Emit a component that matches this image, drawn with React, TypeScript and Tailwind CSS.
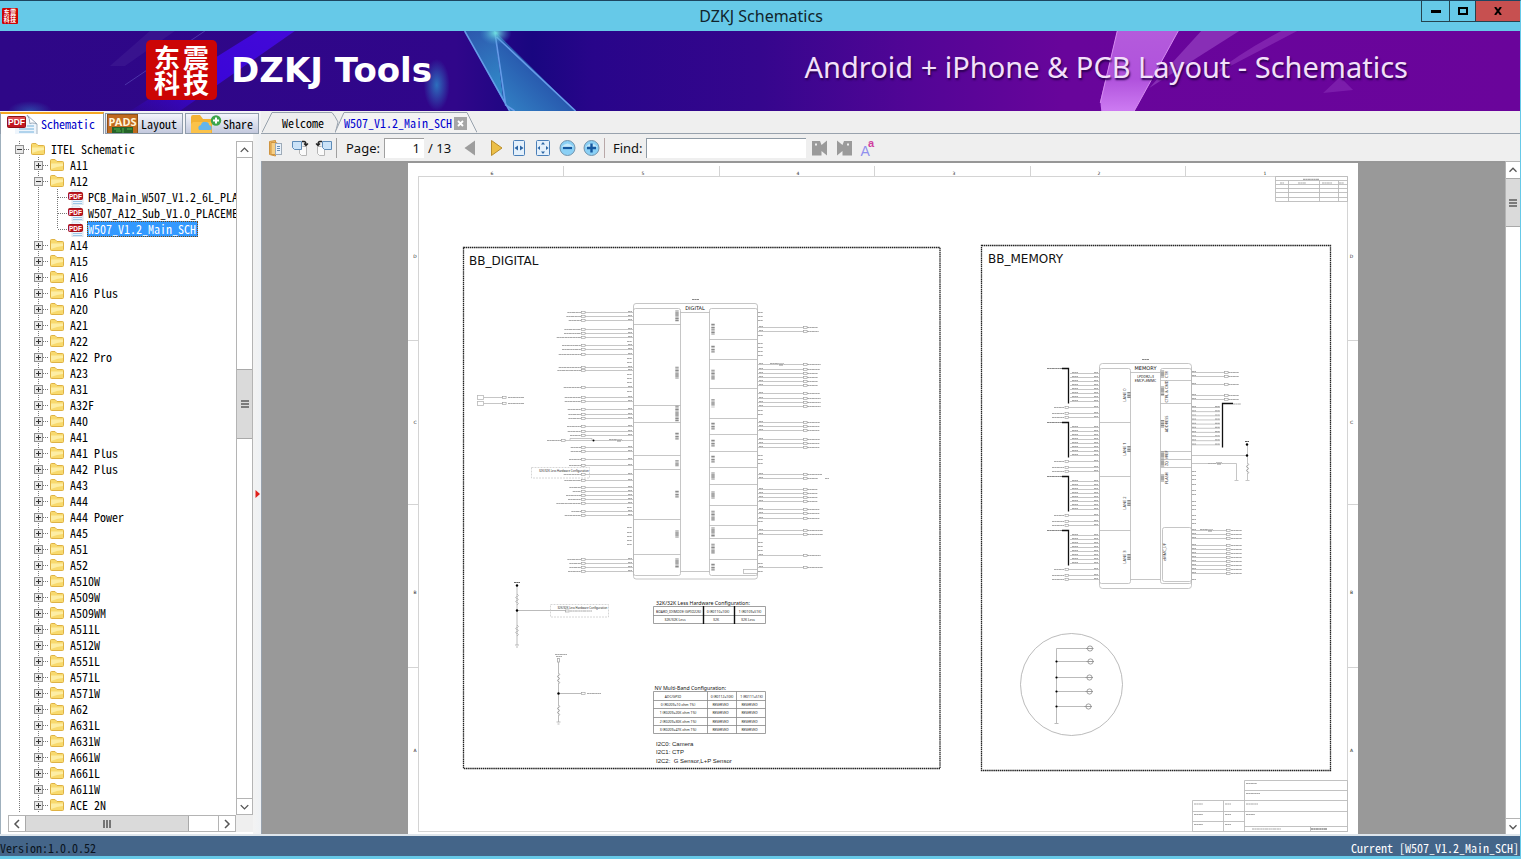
import React from "react";

const mono = "font-['Noto_Sans_Mono_CJK_SC','DejaVu_Sans_Mono',monospace]";

/* ---------- tree ---------- */

type Cell = "line" | "plus" | "minus" | "root" | "branch" | "last";
type Row = { cells: Cell[]; label: string; kind: "folder" | "pdf"; selected?: boolean };

const folder = (label: string): Row => ({ cells: ["line", "plus"], label, kind: "folder" });

const later = [
  "A14", "A15", "A16", "A16 Plus", "A20", "A21", "A22", "A22 Pro", "A23", "A31", "A32F", "A40", "A41",
  "A41 Plus", "A42 Plus", "A43", "A44", "A44 Power", "A45", "A51", "A52", "A510W", "A509W", "A509WM",
  "A511L", "A512W", "A551L", "A571L", "A571W", "A62", "A631L", "A631W", "A661W", "A661L", "A611W", "ACE 2N",
];

const rows: Row[] = [
  { cells: ["root"], label: "ITEL Schematic", kind: "folder" },
  folder("A11"),
  { cells: ["line", "minus"], label: "A12", kind: "folder" },
  { cells: ["line", "line", "branch"], label: "PCB_Main_W507_V1.2_6L_PLACEMENT", kind: "pdf" },
  { cells: ["line", "line", "branch"], label: "W507_A12_Sub_V1.0_PLACEMENT", kind: "pdf" },
  { cells: ["line", "line", "last"], label: "W507_V1.2_Main_SCH", kind: "pdf", selected: true },
  ...later.map(folder),
];

function TreeCell({ type }: { type: Cell }) {
  const box = type === "plus" || type === "minus" || type === "root";
  return (
    <svg viewBox="0 0 19 16" className="h-4 w-[19px] shrink-0" aria-hidden="true">
      <path d={type === "last" ? "M9.5 0V8" : "M9.5 0V16"} stroke="#777" strokeDasharray="1 1" />
      {type !== "line" && <path d="M10 8.5H19" stroke="#777" strokeDasharray="1 1" />}
      {box && (
        <>
          <rect x="5.5" y="4.5" width="8" height="8" fill="#e9e9e9" stroke="#919191" />
          <path d={type === "plus" ? "M7 8.5H12M9.5 6V11" : "M7 8.5H12"} stroke="#333" />
        </>
      )}
    </svg>
  );
}

function FolderIcon() {
  return (
    <svg viewBox="0 0 18 16" className="h-4 w-[18px] shrink-0" aria-hidden="true">
      <path d="M2.5 3.5Q2.5 2.5 3.5 2.5H7L9 4.5H14.5Q15.5 4.5 15.5 5.5V12.5Q15.5 13.5 14.5 13.5H3.5Q2.5 13.5 2.5 12.5Z" fill="#f8da6e" stroke="#dfb244" />
      <path d="M3 6.5H15V9Q9 9.5 3 12Z" fill="#fdeea5" />
    </svg>
  );
}

function PdfIcon({ className }: { className: string }) {
  return (
    <svg viewBox="0 0 31 24" className={className} aria-hidden="true">
      <path d="M8 4H20L30 12V24H8Z" fill="#eef5fc" />
      <path d="M20 3L30 12Q24 10 23 12Q23 6 20 3Z" fill="#fff" stroke="#98a9ba" />
      <path d="M30 12V24" stroke="#a4b4c4" />
      <path d="M20 14H27M12 17H27M12 20H27M12 23H27" stroke="#9cc7e6" strokeWidth="1.6" />
      <rect x="0.5" y="4.5" width="18" height="11" rx="1" fill="#c31721" stroke="#8f1018" />
      <path d="M1 5H18V8H1Z" fill="#dc4a50" />
      <text x="9.5" y="13.2" fontSize="8.5" fontWeight="700" fill="#fff" textAnchor="middle" fontFamily="Liberation Sans, sans-serif">PDF</text>
    </svg>
  );
}

function SmallPdfIcon() {
  return (
    <svg viewBox="0 0 18 16" className="h-4 w-[18px] shrink-0" aria-hidden="true">
      <path d="M5 1H12L16 5V16H5Z" fill="#eef5fc" stroke="#c3d0dc" strokeWidth=".6" />
      <path d="M6 12.5H15M6 14.5H15" stroke="#9cc7e6" />
      <rect x="1.5" y="3.5" width="14" height="7" rx="1" fill="#c31721" stroke="#a3141c" />
      <text x="8.5" y="9.6" fontSize="6.5" fontWeight="700" fill="#fff" textAnchor="middle" fontFamily="Liberation Sans, sans-serif">PDF</text>
    </svg>
  );
}

const rowLabel = {
  folder: "ml-1 h-4",
  pdf: "ml-[3px] h-4",
  selected: "ml-0.5 h-4 bg-[#3399ff] pl-px pr-0.5 text-white outline-1 -outline-offset-1 outline-dotted outline-[#7a4a10]",
};

function Tree() {
  return (
    <ul className={`min-w-0 flex-1 overflow-hidden pl-0.5 text-[12px] leading-4 text-black ${mono}`}>
      {rows.map((r) => (
        <li key={r.label} className="flex h-4 items-center whitespace-nowrap">
          {r.cells.map((c, i) => (
            <TreeCell key={i} type={c} />
          ))}
          {r.kind === "folder" ? <FolderIcon /> : <SmallPdfIcon />}
          <button className={r.selected ? rowLabel.selected : rowLabel[r.kind]}>{r.label}</button>
        </li>
      ))}
    </ul>
  );
}

/* ---------- scroll bars ---------- */

function Chevron({ d }: { d: string }) {
  return (
    <svg viewBox="0 0 16 16" className="size-4" aria-hidden="true">
      <path d={d} fill="none" stroke="#555" strokeWidth="1.5" />
    </svg>
  );
}
const UP = "M4 10L8 6L12 10";
const DOWN = "M4 6L8 10L12 6";
const LEFT = "M10 4L6 8L10 12";
const RIGHT = "M6 4L10 8L6 12";

function Grip({ vertical }: { vertical?: boolean }) {
  return (
    <svg viewBox="0 0 8 8" className="size-2" aria-hidden="true">
      <path d={vertical ? "M0 1H8M0 4H8M0 7H8" : "M1 0V8M4 0V8M7 0V8"} stroke="#5c5c5c" strokeWidth="1.6" />
    </svg>
  );
}

const scrollBtn = "flex shrink-0 items-center justify-center overflow-hidden border-[#b4b4b4] bg-white";

/* ---------- schematic sheet ---------- */

const dy = (v: number) => Math.round(280 + v / 3) + 0.5;
const my = (v: number) => Math.round(340 + v / 3) + 0.5;

/* label start, pin y, in drawing units */
const digitalLeft: [number, number][] = [
  [352, 97], [349, 109], [356, 121], [343, 146], [342, 159], [320, 172], [336, 196], [336, 208], [326, 221],
  [326, 260], [322, 271], [341, 320], [344, 352], [344, 364], [353, 388], [355, 401], [355, 413], [351, 439],
  [353, 452], [360, 464], [362, 502], [362, 514], [357, 538], [357, 556], [341, 583], [343, 601], [358, 620],
  [368, 632], [348, 644], [354, 657], [319, 669], [364, 693], [344, 706], [352, 837], [358, 850], [358, 862], [354, 874],
];
const digitalLeftStubs = [183, 233, 245, 283, 295, 307, 332, 681, 742, 755, 767, 780, 793];
const digitalRight: [number, number][] = [
  [1103, 140], [1106, 152], [1112, 253], [1110, 266], [1103, 278], [1103, 290], [1103, 302], [1103, 314],
  [1110, 340], [1112, 353], [1112, 365], [1112, 377], [1110, 427], [1108, 439], [1108, 451], [1110, 478],
  [1108, 490], [1108, 502], [1116, 583], [1104, 595], [1102, 626], [1102, 638], [1102, 650], [1102, 663],
  [1108, 688], [1108, 700], [1108, 713], [1118, 750], [1118, 763], [1112, 824], [1118, 862],
];
const digitalRightStubs = [97, 107, 121, 164, 188, 201, 214, 226, 389, 401, 524, 537, 550, 724, 787, 799, 811, 849, 874];

function Micro({ x1, x2, y, w = 1.2, c = "#aaa" }: { x1: number; x2: number; y: number; w?: number; c?: string }) {
  return <path d={`M${x1} ${y}H${x2}`} stroke={c} strokeWidth={w} strokeDasharray="2.4 .3 1.6 .3 3.2 .4" />;
}

function VMicro({ x, y, len }: { x: number; y: number; len: number }) {
  return (
    <path d={`M${x} ${y - len / 2}V${y + len / 2}`} stroke="#8a8a8a" strokeWidth="3.4" strokeDasharray="1.1 .5 .6 .6 1.5 .5" />
  );
}

function Port({ x, y }: { x: number; y: number }) {
  return <rect x={x - 1.5} y={y - 1} width="3.6" height="2" fill="#fff" stroke="#999" strokeWidth=".6" />;
}

function Resistor({ x, y }: { x: number; y: number }) {
  return <path d={`M${x} ${y}l1 -1.4l1 2.8l1 -2.8l1 2.8l1 -2.8l1 1.4`} fill="#fff" stroke="#888" strokeWidth=".6" />;
}

function VResistor({ x, y }: { x: number; y: number }) {
  return <path d={`M${x} ${y}l1.4 1.5l-2.8 2l2.8 2l-2.8 2l2.8 2l-1.4 1.5`} fill="#fff" stroke="#888" strokeWidth=".6" />;
}

function DigitalBlock() {
  return (
    <g fill="none" stroke="#b8b8b8" strokeWidth=".8">
      <rect x="633.5" y="303.5" width="124" height="275.5" rx="2.5" />
      <rect x="633.5" y="308.5" width="47" height="267" rx="2" />
      <rect x="709.5" y="308.5" width="48" height="267" rx="2" />
      <path d="M680.5 312.5H709.5M680.5 571.5H709.5" />
      {[133, 376, 427, 526, 568, 718, 823].map((v) => (
        <path key={v} d={`M633.5 ${dy(v)}H680.5`} />
      ))}
      {[178, 238, 325, 415, 463, 514, 562, 613, 676, 736, 775, 838].map((v) => (
        <path key={v} d={`M709.5 ${dy(v)}H757.5`} />
      ))}
      <rect x="743.5" y="569.5" width="14" height="4" />
      {[[108, 11], [278, 12], [401, 16], [469, 7], [550, 6], [643, 7], [762, 7], [849, 9]].map(([v, l]) => (
        <VMicro key={v} x={677} y={280 + v / 3} len={l} />
      ))}
      {[[148, 11], [208, 7], [284, 10], [370, 8], [439, 7], [490, 7], [538, 7], [588, 7], [645, 7], [707, 10], [756, 9], [806, 10], [862, 7]].map(([v, l]) => (
        <VMicro key={v} x={713} y={280 + v / 3} len={l} />
      ))}
      {digitalLeft.map(([s, v]) => (
        <g key={v}>
          <path d={`M585 ${dy(v)}H633`} />
          <Port x={583} y={dy(v)} />
          <Micro x1={450 + s / 3} x2={581} y={dy(v)} />
          <Micro x1={628} x2={632} y={dy(v) - 1} />
        </g>
      ))}
      {digitalLeftStubs.map((v) => (
        <Micro key={v} x1={627} x2={632} y={dy(v)} />
      ))}
      {digitalRight.map(([e, v]) => (
        <g key={v}>
          <path d={`M758 ${dy(v)}H804`} />
          <Port x={805} y={dy(v)} />
          <Micro x1={807} x2={450 + e / 3} y={dy(v)} />
          <Micro x1={759} x2={763} y={dy(v) - 1} />
        </g>
      ))}
      {digitalRightStubs.map((v) => (
        <Micro key={v} x1={758} x2={763} y={dy(v)} />
      ))}
      <path d="M565 440.5H633" />
      <Port x={563} y={440.5} />
      <Micro x1={547} x2={561} y={440.5} />
      <Micro x1={609} x2={616} y={439.5} />
      <Resistor x={616} y={440.5} />
      <path d="M570 440V438.5H592V440" />
      <circle cx="593.5" cy="440.5" r="1" fill="#000" stroke="none" />
      <Micro x1={770} x2={778} y={363.5} />
      <Resistor x={778} y={364.5} />
      <rect x="531.5" y="467.5" width="58" height="10.5" strokeDasharray="2 1" stroke="#ccc" />
      <Micro x1={692} x2={699} y={299.5} c="#888" />
      {[397.5, 403.5].map((y) => (
        <g key={y}>
          <rect x="477.5" y={y - 2} width="6" height="4" />
          <path d={`M484 ${y}H503`} />
          <Port x={504} y={y} />
          <Micro x1={508} x2={524} y={y} />
        </g>
      ))}
      <Micro x1={825} x2={829} y={478.5} />
    </g>
  );
}

function SideCircuits() {
  return (
    <g fill="none" stroke="#aaa" strokeWidth=".8">
      <Micro x1={514} x2={520} y={582.5} c="#666" />
      <path d="M517 585V645M517 610.5H567M515 645H519M516 647H518" />
      <circle cx="517" cy="585.5" r="1.2" fill="#000" stroke="none" />
      <circle cx="517" cy="610.5" r="1.2" fill="#000" stroke="none" />
      <VResistor x={517} y={594} />
      <VResistor x={517} y={625} />
      <rect x="550.5" y="604.5" width="58" height="12.5" strokeDasharray="2 1" stroke="#ccc" />
      <Port x={567} y={611} />
      <Micro x1={570} x2={592} y={611} />
      <Micro x1={555} x2={567} y={654.5} />
      <Micro x1={556} x2={562} y={656.5} />
      <path d="M558.5 662V722M558.5 693.5H581M556.5 722H560.5M557.5 724H559.5" />
      <rect x="557.5" y="658.5" width="2" height="3.5" />
      <circle cx="558.5" cy="693.5" r="1.2" fill="#000" stroke="none" />
      <VResistor x={558.5} y={673} />
      <VResistor x={558.5} y={705} />
      <Port x={583} y={693.5} />
      <Micro x1={587} x2={601} y={693.5} />
    </g>
  );
}

function MemoryBlock() {
  return (
    <g fill="none" stroke="#b8b8b8" strokeWidth=".8">
      <rect x="1099.5" y="363.5" width="92" height="225" rx="3" />
      <rect x="1099.5" y="368.5" width="31" height="215" rx="2" />
      <rect x="1160.5" y="368.5" width="31" height="215" rx="2" />
      <rect x="1162.5" y="527.5" width="29" height="54" rx="2" />
      <path d="M1130.5 372.5H1160.5M1130.5 579.5H1160.5M1099.5 422.5H1130.5M1099.5 476.5H1130.5M1099.5 530.5H1130.5" />
      <path d="M1160.5 380.5H1191.5M1160.5 403.5H1191.5M1160.5 451.5H1191.5M1160.5 459.5H1191.5M1160.5 467.5H1191.5" />
      <Micro x1={1142} x2={1149} y={359.5} c="#888" />
      {[0, 54, 108, 162].map((o, lane) => (
        <g key={o}>
          <path d={`M1062 ${368.5 + o}H1068.5V${403.5 + o}`} stroke="#111" strokeWidth="1.3" />
          <Micro x1={1047} x2={1062} y={368.5 + o} c="#888" />
          {[0, 1, 2, 3, 4, 5, 6, 7].map((i) => (
            <g key={i}>
              <path d={`M1070 ${373.5 + o + i * 4}H1099`} />
              <Micro x1={1072} x2={1078} y={372.5 + o + i * 4} />
              <Micro x1={1094} x2={1098} y={372.5 + o + i * 4} />
            </g>
          ))}
          {[407.5, 413.5, 417.5].map((y) => (
            <g key={y}>
              <path d={`M1068 ${y + o}H1099`} />
              <Port x={1066.5} y={y + o} />
              <Micro x1={y === 407.5 ? 1054 : 1052} x2={1064} y={y + o} />
              <Micro x1={1094} x2={1098} y={y - 1 + o} />
            </g>
          ))}
          <text transform={`translate(1126 ${395 + o}) rotate(-90)`} fontSize="4" fill="#333" stroke="none" textAnchor="middle" fontFamily="Noto Sans, sans-serif">{`LANE ${lane}`}</text>
          <VMicro x={1129} y={395 + o} len={6} />
        </g>
      ))}
      {[97, 109, 133, 166, 178].map((v) => (
        <g key={v}>
          <path d={`M1192 ${my(v)}H1225`} />
          <Port x={1226} y={my(v)} />
          <Micro x1={1228} x2={1239} y={my(v)} />
          <Micro x1={1192} x2={1196} y={my(v) - 1} />
        </g>
      ))}
      {[0, 1, 2, 3, 4, 5, 6, 7, 8, 9].map((i) => (
        <g key={i}>
          <path d={`M1192 ${407.5 + i * 4.15}H1220`} />
          <Micro x1={1215} x2={1220} y={406.7 + i * 4.15} />
          <Micro x1={1192} x2={1196} y={406.7 + i * 4.15} />
        </g>
      ))}
      <path d="M1233 403.5H1222.5V447.5" stroke="#111" strokeWidth="1.3" />
      <Micro x1={1233} x2={1241} y={404} />
      <path d="M1192 455.5H1247M1192 463.5H1236.5V480M1247.5 444V480M1234.5 480.5H1238.5M1245.5 480.5H1249.5" />
      <circle cx="1247" cy="444.5" r="1.2" fill="#000" stroke="none" />
      <circle cx="1247" cy="455.5" r="1.2" fill="#000" stroke="none" />
      <Micro x1={1245} x2={1249} y={441.5} c="#555" />
      <VResistor x={1247.5} y={463} />
      <Micro x1={1208} x2={1216} y={463.5} />
      <Resistor x={1216} y={463.5} />
      {[394, 406, 418, 432, 450, 462, 482, 494, 508, 525, 537, 549, 718].map((v) => (
        <Micro key={v} x1={1192} x2={1196} y={my(v)} />
      ))}
      {[570, 582, 595, 614, 626, 638, 650, 663, 675, 688, 700].map((v) => (
        <g key={v}>
          <path d={`M1192 ${my(v)}H1227`} />
          <Port x={1228} y={my(v)} />
          <Micro x1={1231} x2={1242} y={my(v)} />
          <Micro x1={1192} x2={1196} y={my(v) - 1} />
        </g>
      ))}
      <Micro x1={1200} x2={1207} y={529.5} />
      <Resistor x={1207} y={530.5} />
      {[[374, 7], [391, 9], [424, 8], [455, 7], [463, 7], [478, 7]].map(([y, l]) => (
        <VMicro key={y} x={1162.5} y={y} len={l} />
      ))}
    </g>
  );
}

const memoryLabels: [string, number][] = [["CTR", 374.5], ["CTRL & CMD", 391.5], ["ADDRESS", 424], ["VREF", 455], ["ZQ", 463.5], ["FLASH", 478]];

function ConfigTables() {
  return (
    <g fontSize="3.4" fill="#222" textAnchor="middle" fontFamily="Noto Sans, Open Sans, sans-serif">
      <g fill="none" stroke="#888" strokeWidth=".8">
        <path d="M653.5 606.5H765.5V623.5H653.5ZM653.5 615.5H765.5" />
        <path d="M703.5 606V624M734.5 606V624" stroke="#111" strokeWidth="1.4" />
        <path d="M653.5 691.5H765.5V733.5H653.5ZM653.5 700.5H765.5M653.5 708.5H765.5M653.5 717.5H765.5M653.5 725.5H765.5M707.5 691.5V733.5M736.5 691.5V733.5" />
      </g>
      <text x="678.5" y="612.8">BOARD_ID(MODE (GPIO226)</text>
      <text x="718" y="612.8">0 (R0110=10K)</text>
      <text x="750" y="612.8">1 (R0109=51K)</text>
      <text x="675" y="621.4">32K/32K Less</text>
      <text x="716" y="621.4">32K</text>
      <text x="748" y="621.4">32K Less</text>
      <text x="673" y="697.6">ADC/GPIO</text>
      <text x="722" y="697.6">0 (R0112=10K)</text>
      <text x="751.5" y="697.6">1 (R0111=51K)</text>
      {["0 (R0209=10 ohm 1%)", "1 (R0209=20K ohm 1%)", "2 (R0209=30K ohm 1%)", "3 (R0209=47K ohm 1%)"].map((t, i) => (
        <g key={t}>
          <text x="678" y={706 + i * 8.4}>{t}</text>
          <text x="720.5" y={706 + i * 8.4}>RESERVED</text>
          <text x="749.5" y={706 + i * 8.4}>RESERVED</text>
        </g>
      ))}
    </g>
  );
}

function Sheet() {
  return (
    <svg viewBox="408 163 950 671" className="h-full max-w-full bg-white" role="img" aria-label="W507_V1.2_Main_SCH, page 1" fontFamily="DejaVu Sans, Verdana, sans-serif">
      <g fill="none" stroke="#d4d4d4">
        <rect x="418.5" y="176.5" width="929" height="655" />
        <path d="M563.5 166V176M719.5 166V176M874.5 166V176M1030.5 166V176M1185.5 166V176" />
        <path d="M408 340.5H418M408 504.5H418M408 667.5H418M1348 340.5H1358M1348 504.5H1358M1348 667.5H1358" />
      </g>
      <g fontSize="4.5" fill="#222" textAnchor="middle">
        {[["6", 492], ["5", 643], ["4", 798], ["3", 954], ["2", 1099], ["1", 1265]].map(([t, x]) => (
          <text key={t} x={x} y="174.5">{t}</text>
        ))}
        {([["D", 257.5], ["C", 423.5], ["B", 593.5], ["A", 751.5]] as [string, number][]).map(([t, y]) => (
          <g key={t}>
            <text x="415" y={y}>{t}</text>
            <text x="1351.5" y={y}>{t}</text>
          </g>
        ))}
      </g>
      <g fill="none" stroke="#222" strokeWidth="1.3" strokeDasharray="1.5 .6">
        <rect x="463.5" y="247.5" width="476.5" height="521" />
        <rect x="981.5" y="245.5" width="349" height="525" />
      </g>
      <g fill="#111">
        <text x="469" y="265" fontSize="12">BB_DIGITAL</text>
        <text x="988" y="263" fontSize="12">BB_MEMORY</text>
        <text x="695" y="310" fontSize="5" textAnchor="middle">DIGITAL</text>
        <text x="1145.5" y="370.3" fontSize="5" textAnchor="middle">MEMORY</text>
      </g>
      <g fill="#111" fontFamily="Noto Sans, Open Sans, sans-serif">
        <text x="1145.5" y="378" fontSize="3.4" textAnchor="middle">LPDDR2+3</text>
        <text x="1145.5" y="382" fontSize="3.4" textAnchor="middle">EMCP+EMMC</text>
        <text x="656" y="604.5" fontSize="5.2">32K/32K Less Hardware Configuration:</text>
        <text x="654.5" y="689.5" fontSize="5.2">NV Multi-Band Configuration:</text>
      </g>
      <DigitalBlock />
      <SideCircuits />
      <MemoryBlock />
      <g fill="#222" fontSize="2.8" fontFamily="Noto Sans, Open Sans, sans-serif">
        <text x="539" y="471.8">32K/32K Less Hardware Configuration</text>
        <text x="557.5" y="608.6">32K/32K Less Hardware Configuration</text>
      </g>
      <g fill="#333" fontSize="3.8" textAnchor="middle" fontFamily="Noto Sans, Open Sans, sans-serif">
        {memoryLabels.map(([t, y]) => (
          <text key={t} transform={`translate(1168 ${y}) rotate(-90)`}>{t}</text>
        ))}
        <text transform="translate(1165.5 552) rotate(-90)">eMMC_I/F</text>
      </g>
      <ConfigTables />
      <g fill="#222" fontSize="6" fontFamily="Liberation Sans, Arial, sans-serif">
        <text x="656" y="746">I2C0: Camera</text>
        <text x="656" y="754.3">I2C1: CTP</text>
        <text x="656" y="762.8" xmlSpace="preserve">I2C2:  G Sensor,L+P Sensor</text>
      </g>
      <g fill="none" stroke="#aaa" strokeWidth=".8">
        <circle cx="1071.5" cy="684.5" r="51" />
        <path d="M1056.5 723V648.5H1087M1056.5 661.5H1087M1056.5 677.5H1086M1056.5 691.5H1086M1056.5 706.5H1085M1054.5 723.5H1058.5" />
        {[[1090, 648], [1090.5, 661], [1089.5, 677], [1089.5, 691], [1088.5, 706]].map(([x, y]) => (
          <g key={y} stroke="#888">
            <circle cx={x} cy={y + 0.5} r="2.6" />
            <path d={`M${x - 4} ${y + 0.5}H${x + 3.5}`} />
          </g>
        ))}
        {[661.5, 677.5, 691.5, 706.5].map((y) => (
          <circle key={y} cx="1056.5" cy={y} r="1.1" fill="#000" stroke="none" />
        ))}
      </g>
      <g fill="none" stroke="#bbb" strokeWidth=".9">
        <path d="M1275.5 176.5H1347.5V201.5H1275.5ZM1275.5 180.5H1347.5M1275.5 184.5H1347.5M1275.5 188.5H1347.5M1275.5 192.5H1347.5M1275.5 197.5H1347.5M1288.5 180.5V201.5M1319.5 180.5V201.5M1338.5 180.5V201.5" />
        <path d="M1244.5 831.5V780.5H1347.5V831.5ZM1244.5 790.5H1347.5M1192.5 800.5H1347.5M1192.5 811.5H1347.5M1192.5 821.5H1244.5M1244.5 826.5H1347.5M1192.5 800.5V831.5H1347.5M1223.5 800.5V831.5M1310.5 826.5V831.5" />
        <Micro x1={1303} x2={1319} y={179.3} />
        <Micro x1={1280} x2={1284} y={183} />
        <Micro x1={1298} x2={1306} y={183} />
        <Micro x1={1322} x2={1332} y={183} />
        <Micro x1={1339} x2={1344} y={183} />
        <Micro x1={1246} x2={1257} y={783.5} />
        <Micro x1={1246} x2={1260} y={793.5} />
        <Micro x1={1246} x2={1258} y={804} />
        <Micro x1={1246} x2={1255} y={814.5} />
        {[804, 814.5, 824.5].map((y) => (
          <g key={y}>
            <Micro x1={1194} x2={1203} y={y} />
            <Micro x1={1225} x2={1231} y={y} />
          </g>
        ))}
        <Micro x1={1252} x2={1281} y={829} />
        <Micro x1={1311} x2={1327} y={829} c="#555" />
      </g>
    </svg>
  );
}

/* ---------- window chrome ---------- */

function Seal({ className }: { className: string }) {
  return (
    <svg viewBox="0 0 71 60" preserveAspectRatio="none" className={className} aria-label="东震科技" role="img">
      <rect width="71" height="60" rx="5" fill="#cc0505" />
      <g fill="#fff" fontSize="26" fontWeight="700" fontFamily="Noto Sans CJK SC, sans-serif" textAnchor="middle">
        <text x="21" y="28">东</text>
        <text x="50" y="28">震</text>
        <text x="21" y="53">科</text>
        <text x="50" y="53">技</text>
      </g>
    </svg>
  );
}

function BannerArt() {
  return (
    <svg viewBox="0 0 1521 80" preserveAspectRatio="none" className="absolute inset-0 size-full" aria-hidden="true">
      <defs>
        <linearGradient id="base">
          <stop offset="0" stopColor="#2e0787" />
          <stop offset=".3" stopColor="#30068a" />
          <stop offset=".35" stopColor="#190680" />
          <stop offset=".39" stopColor="#28058a" />
          <stop offset=".5" stopColor="#35068d" />
          <stop offset=".6" stopColor="#520596" />
          <stop offset=".7" stopColor="#68059b" />
          <stop offset="1" stopColor="#6a049b" />
        </linearGradient>
        <linearGradient id="beam" x1="1" y1="0" x2="0" y2="1">
          <stop offset="0" stopColor="#4309d8" />
          <stop offset=".6" stopColor="#3a05d8" />
          <stop offset="1" stopColor="#3a05d8" stopOpacity=".1" />
        </linearGradient>
        <linearGradient id="glass" x1="0" y1="0" x2=".3" y2="1">
          <stop offset="0" stopColor="#2d57ad" />
          <stop offset="1" stopColor="#3189c8" />
        </linearGradient>
        <linearGradient id="glass2" x1="1" y1="0" x2="0" y2="1">
          <stop offset="0" stopColor="#1c2a94" />
          <stop offset="1" stopColor="#3488c8" />
        </linearGradient>
        <linearGradient id="pink" x1="0" y1="0" x2="0" y2="1">
          <stop offset="0" stopColor="#b45bdc" />
          <stop offset=".6" stopColor="#b052dc" />
          <stop offset="1" stopColor="#cd7bf2" />
        </linearGradient>
        <radialGradient id="glow">
          <stop offset="0" stopColor="#2d6fbd" />
          <stop offset="1" stopColor="#2d6fbd" stopOpacity="0" />
        </radialGradient>
        <radialGradient id="star">
          <stop offset="0" stopColor="#6fe0e0" />
          <stop offset="1" stopColor="#4090d0" stopOpacity="0" />
        </radialGradient>
      </defs>
      <rect width="1521" height="80" fill="url(#base)" />
      <path d="M258 0H295L180 80H130Z" fill="url(#beam)" />
      <path d="M150 0H175L125 35H110Z" fill="#4a2b9c" opacity=".35" />
      <path d="M205 0L125 54" stroke="#5a48b8" opacity=".7" />
      <ellipse cx="30" cy="80" rx="22" ry="10" fill="url(#glow)" opacity=".6" />
      <ellipse cx="437" cy="54" rx="13" ry="26" fill="url(#glow)" />
      <path d="M465 0H495L504 71Z" fill="url(#glass)" />
      <path d="M495 0L576 80H510L504 71Z" fill="url(#glass2)" />
      <path d="M465 0L510 80M495 0L506 74L515 80M497 6L576 80" fill="none" stroke="#659be8" strokeWidth="1.6" />
      <ellipse cx="496" cy="2" rx="16" ry="12" fill="url(#star)" />
      <path d="M1118 0H1179L1135 80H1102L1101 70Z" fill="url(#pink)" />
      <path d="M1118 0L1101 72" stroke="#d58bf0" />
      <path d="M1179 0L1135 80" stroke="#d58bf0" />
      <path d="M1202 0H1240L1150 57Z" fill="#9a45c4" opacity=".65" />
      <path d="M1282 0H1298L1212 45Q1240 22 1282 0Z" fill="#8f35bb" opacity=".6" />
      <path d="M1324 62L1341 46L1354 59Z" fill="#8a32b8" opacity=".55" />
    </svg>
  );
}

function DocTab({ active, children }: { active?: boolean; children: React.ReactNode }) {
  return (
    <div className={active ? "relative -ml-1 flex h-[22px] w-[142px] items-center pl-[9px] pt-0.5" : "relative flex h-[22px] w-[77px] items-center pl-5 pt-0.5"}>
      <svg viewBox={active ? "0 0 142 22" : "0 0 77 22"} className="absolute inset-0 size-full" aria-hidden="true">
        <path
          d={active ? "M0 21.5L9 1.5H132L142 21.5" : "M0 21.5L10 1.5H70Q73 5 76 11L73.5 21.5"}
          fill={active ? "#f3f3f3" : "#eee"}
          stroke="#98a2ad"
        />
      </svg>
      {children}
    </div>
  );
}

function ToolIcon({ label, className, children }: { label: string; className?: string; children: React.ReactNode }) {
  return (
    <button aria-label={label} className={`flex w-6 shrink-0 items-center justify-center ${className ?? ""}`}>
      <svg viewBox="0 0 18 18" className="size-[18px]" aria-hidden="true">
        {children}
      </svg>
    </button>
  );
}

function ToolBar() {
  return (
    <div className="flex h-[27px] shrink-0 items-center bg-[#efefef] pl-[3px] font-['Noto_Sans','Open_Sans',sans-serif] text-[13px] leading-5 text-[#111]">
      <ToolIcon label="Open">
        <path d="M2.5 2.5L8.5 1.5V17L2.5 15.5Z" fill="#f0bc62" stroke="#cf9440" />
        <path d="M4 3.5H9L14 6.5V15.5H4Z" fill="#f6cf85" stroke="#cf9440" />
        <rect x="8.5" y="4.5" width="6" height="11" fill="#e8f1fa" stroke="#9eabb8" />
        <path d="M10 7.5H13M10 9.5H13M10 11.5H13" stroke="#668fb8" />
      </ToolIcon>
      <ToolIcon label="Rotate right">
        <path d="M11.5 7.5H15.5V16.5H10.5L8.5 14.5V10" fill="#fafafa" stroke="#b6b6b6" />
        <path d="M1.5 2.5H10.5V10.5H3.5L1.5 8.5Z" fill="#cbe3f8" stroke="#5e8cb8" />
        <path d="M11 2.5H13Q15 2.5 15 5.5M13 4.5L15 6.5L17 4.5" fill="none" stroke="#222" strokeWidth="1.3" />
      </ToolIcon>
      <ToolIcon label="Rotate left">
        <path d="M6.5 7.5H2.5V14.5L4.5 16.5H9.5V10" fill="#fafafa" stroke="#b6b6b6" />
        <path d="M7.5 2.5H16.5V10.5H9.5L7.5 8.5Z" fill="#cbe3f8" stroke="#5e8cb8" />
        <path d="M7 2.5H5Q3 2.5 3 5.5M1 4.5L3 6.5L5 4.5" fill="none" stroke="#222" strokeWidth="1.3" />
      </ToolIcon>
      <span className="h-5 w-px bg-[#a0a0a0]" />
      <label htmlFor="page" className="ml-[9px]">Page:</label>
      <input
        id="page"
        defaultValue="1"
        className="ml-1 h-5 w-10 border-l border-t border-[#a0a0a0] bg-white pr-1 text-right outline-none"
      />
      <span className="ml-1 w-[30px] whitespace-nowrap">/ 13</span>
      <ToolIcon label="Previous page">
        <path d="M14 1.5V16.5L3.5 9Z" fill="#9d9d9d" />
      </ToolIcon>
      <ToolIcon label="Next page" className="ml-0.5">
        <path d="M4.5 1.5V16.5L15 9Z" fill="#ecbf48" stroke="#b98d2c" />
      </ToolIcon>
      <ToolIcon label="Fit width">
        <rect x="2.5" y="1.5" width="11" height="15" rx="1" fill="#e4f0fb" stroke="#4a7fb8" />
        <path d="M7 6.5V11.5L3.5 9ZM9 6.5V11.5L12.5 9Z" fill="#2c66a6" />
      </ToolIcon>
      <ToolIcon label="Fit page">
        <rect x="1.5" y="1.5" width="13" height="15" rx="1" fill="#e4f0fb" stroke="#4a7fb8" />
        <path d="M8 3L10 5.5H6ZM8 15L10 12.5H6ZM2.5 9L5 7V11ZM13.5 9L11 7V11Z" fill="#2c66a6" />
      </ToolIcon>
      <ToolIcon label="Zoom out">
        <circle cx="8.5" cy="9" r="7.5" fill="#8bd0f5" stroke="#7394ad" />
        <path d="M2.5 8Q8.5 1 14.5 8Z" fill="#c5e9fb" />
        <path d="M4 9H13" stroke="#1558a0" strokeWidth="2.2" />
      </ToolIcon>
      <ToolIcon label="Zoom in">
        <circle cx="8.5" cy="9" r="7.5" fill="#8bd0f5" stroke="#7394ad" />
        <path d="M2.5 8Q8.5 1 14.5 8Z" fill="#c5e9fb" />
        <path d="M4 9H13M8.5 4.5V13.5" stroke="#1558a0" strokeWidth="2.4" />
      </ToolIcon>
      <span className="h-5 w-px bg-[#b8a8a8]" />
      <label htmlFor="find" className="ml-2 w-[33px]">Find:</label>
      <input id="find" className="h-5 w-40 border-l border-t border-[#8e9aa5] bg-white px-1 outline-none" />
      <ToolIcon label="Find previous" className="ml-0.5">
        <path d="M1 2H9L10.5 6L16 1.5V16.5L10.5 12V16.5H1Z" fill="#9a9a9a" />
        <path d="M4 4.5H6V6.5H4Z" fill="#eee" />
      </ToolIcon>
      <ToolIcon label="Find next">
        <path d="M17 2H9L7.5 6L2 1.5V16.5L7.5 12V16.5H17Z" fill="#9a9a9a" />
        <path d="M12 4.5H14V6.5H12Z" fill="#eee" />
      </ToolIcon>
      <ToolIcon label="Match case">
        <text x="1.5" y="16.5" fontSize="14" fill="#9090ee" fontFamily="Liberation Sans, sans-serif">A</text>
        <text x="9" y="8" fontSize="11" fontWeight="700" fill="#cf3fa0" fontFamily="Liberation Sans, sans-serif">a</text>
      </ToolIcon>
    </div>
  );
}

export default function App() {
  return (
    <div className="flex h-screen min-h-[480px] flex-col overflow-hidden border-b-[3px] border-r border-t border-b-[#66c9e8] border-r-[#66c9e8] border-t-[#1d4560] bg-[#66c9e8]">
      <header className="flex h-[30px] shrink-0 items-start">
        <div className="flex h-full flex-1 items-center pl-0.5">
          <Seal className="h-4 w-4" />
        </div>
        <h1 className="self-center font-['Noto_Sans','Open_Sans',sans-serif] text-[16px] leading-5 text-[#10242c]">DZKJ Schematics</h1>
        <div className="flex flex-1 justify-end">
          <div className="flex h-[21px] border-b border-l border-[#25424e]">
            <button aria-label="Minimize" className="flex w-7 items-center justify-center border-r border-[#25424e]">
              <span className="h-[3px] w-[10px] bg-black" />
            </button>
            <button aria-label="Maximize" className="flex w-[26px] items-center justify-center border-r border-[#25424e]">
              <span className="h-2 w-[10px] border-2 border-black" />
            </button>
            <button aria-label="Close" className="flex w-11 items-center justify-center bg-[#c75050]">
              <svg viewBox="0 0 10 8" className="h-2 w-[10px]" aria-hidden="true">
                <path d="M2 0L8 8M8 0L2 8" stroke="#000" strokeWidth="2" />
              </svg>
            </button>
          </div>
        </div>
      </header>

      <div className="relative flex h-20 shrink-0 items-center justify-between overflow-hidden bg-[#300888] pb-0.5 pl-[146px] pr-28">
        <BannerArt />
        <div className="relative flex items-center gap-3.5">
          <Seal className="h-[60px] w-[71px]" />
          <span className="font-['DejaVu_Sans',Verdana,sans-serif] text-[34px] font-bold leading-10 text-white">DZKJ Tools</span>
        </div>
        <span className="relative whitespace-nowrap pb-1.5 font-['Noto_Sans','Open_Sans',sans-serif] text-[29px] leading-9 text-[#f3e0fa] [text-shadow:1px_2px_2px_#2a0050]">
          Android + iPhone &amp; PCB Layout - Schematics
        </span>
      </div>

      <div className="flex min-h-0 flex-1 bg-[#efefef]">
        <aside className="flex w-[261px] shrink-0 flex-col bg-[#f4f4f6]">
          <div className={`flex h-[23px] shrink-0 items-end text-[12px] leading-4 ${mono}`}>
            <button className="flex h-[22px] w-[104px] shrink-0 items-center border-l border-r border-t-2 border-l-[#8f9cab] border-r-[#8f9cab] border-t-[#f5a623] bg-white pl-[6px] text-[#0000c8]">
              <PdfIcon className="h-6 w-[31px] shrink-0" />
              <span className="ml-[3px]">Schematic</span>
            </button>
            <button className="ml-px flex h-[21px] w-[78px] shrink-0 items-center border border-[#8f9cab] bg-linear-to-b from-[#f4f5fb] to-[#c3c9de] text-black">
              <svg viewBox="0 0 31 19" className="ml-px h-[19px] w-[31px] shrink-0" aria-hidden="true">
                <rect x="0.5" y="0.5" width="30" height="19" fill="#c06a1e" stroke="#8f5018" />
                <rect x="5" y="13" width="21" height="6" fill="#25632a" />
                <path d="M7 15H13M16 14V19M20 15H25M9 17H14" stroke="#54b24c" />
                <text x="15.5" y="11.6" fontSize="11" fontWeight="700" fill="#fff4d8" textAnchor="middle" fontFamily="Noto Sans, sans-serif">PADS</text>
              </svg>
              <span className="ml-[3px]">Layout</span>
            </button>
            <button className="ml-0.5 flex h-[21px] w-[74px] shrink-0 items-center border border-[#8f9cab] bg-linear-to-b from-[#f4f5fb] to-[#c3c9de] text-black">
              <svg viewBox="0 0 33 19" className="ml-1 h-[19px] w-[33px] shrink-0" aria-hidden="true">
                <path d="M1 3Q1 1 3 1H10L13 5H22V19H1Z" fill="#f3b233" />
                <path d="M3 8H21V19H1V10Z" fill="#fbc24a" />
                <path d="M9 16Q7 12 11 11Q12 7 16 8Q19 8 19 11Q23 12 21 16Z" fill="#63b5ec" />
                <circle cx="26" cy="6.5" r="5.2" fill="#3da54a" />
                <path d="M23 6.5H29M26 3.5V9.5" stroke="#fff" strokeWidth="2" />
              </svg>
              <span>Share</span>
            </button>
          </div>
          <div className="flex min-h-0 flex-1 border-l border-[#9fb0bd] bg-white">
            <div className="flex min-w-0 flex-1 flex-col pb-0.5 pl-[7px] pt-[7px]">
              <div className="flex min-h-0 flex-1">
                <Tree />
                <div className="flex w-[17px] shrink-0 flex-col border border-[#b4b4b4] bg-white">
                  <button aria-label="Scroll up" className={`${scrollBtn} h-4 border-b`}><Chevron d={UP} /></button>
                  <div className="grow-[211]" />
                  <div className="flex h-[70px] shrink-0 items-center justify-center border-y border-[#a9a9a9] bg-[#dadada]"><Grip vertical /></div>
                  <div className="grow-[359]" />
                  <button aria-label="Scroll down" className={`${scrollBtn} h-4 border-t`}><Chevron d={DOWN} /></button>
                </div>
              </div>
              <div className="flex h-[17px] shrink-0 bg-[#efefef] pr-[17px]">
                <div className="flex flex-1 border border-[#b4b4b4] bg-white">
                  <button aria-label="Scroll left" className={`${scrollBtn} w-4`}><Chevron d={LEFT} /></button>
                  <div className="flex w-[164px] items-center justify-center border-x border-[#a9a9a9] bg-[#dadada]"><Grip /></div>
                  <div className="flex-1" />
                  <button aria-label="Scroll right" className={`${scrollBtn} w-[17px] border-l`}><Chevron d={RIGHT} /></button>
                </div>
              </div>
            </div>
            <div className="flex w-2 shrink-0 items-center justify-center bg-linear-to-r from-[#f3f3f3] to-[#eef1f4]">
              <svg viewBox="0 0 5 8" className="mt-5 h-2 w-[5px]" aria-hidden="true">
                <path d="M0.5 0L5 4L0.5 8Z" fill="#e0201b" />
              </svg>
            </div>
          </div>
        </aside>

        <main className="flex min-w-0 flex-1 flex-col">
          <div className={`flex h-[23px] shrink-0 items-end border-b border-[#98a2ad] pl-px text-[12px] leading-4 ${mono}`}>
            <DocTab>
              <button className="relative text-black">Welcome</button>
            </DocTab>
            <DocTab active>
              <button className="relative text-[#0000d0]">W507_V1.2_Main_SCH</button>
              <button aria-label="Close tab" className="relative ml-0.5 flex size-[13px] items-center justify-center bg-[#a5a5a5]">
                <svg viewBox="0 0 7 7" className="size-[7px]" aria-hidden="true">
                  <path d="M1 1L6 6M6 1L1 6" stroke="#fff" strokeWidth="1.8" />
                </svg>
              </button>
            </DocTab>
          </div>
          <ToolBar />
          <div className="flex min-h-0 flex-1 border-l border-[#98a2ad]">
            <div className="flex min-w-0 flex-1 justify-center border-t-2 border-[#979797] bg-[#999] pr-0.5">
              <Sheet />
            </div>
            <div className="flex w-[15px] shrink-0 flex-col border-l border-t border-[#b4b4b4] bg-white">
              <button aria-label="Scroll up" className={`${scrollBtn} h-4`}><Chevron d={UP} /></button>
              <div className="flex h-[49px] shrink-0 items-center justify-center border-y border-[#a9a9a9] bg-[#dadada]"><Grip vertical /></div>
              <div className="flex-1" />
              <button aria-label="Scroll down" className={`${scrollBtn} h-4 border-t`}><Chevron d={DOWN} /></button>
            </div>
          </div>
        </main>
      </div>

      <footer className={`flex h-[22px] shrink-0 items-end justify-between border-t-2 border-[#dfe6ec] bg-[#446589] text-[12px] leading-4 ${mono}`}>
        <span className="text-[#0a1420]">Version:1.0.0.52</span>
        <span className="pr-px text-white">Current [W507_V1.2_Main_SCH]</span>
      </footer>
    </div>
  );
}
